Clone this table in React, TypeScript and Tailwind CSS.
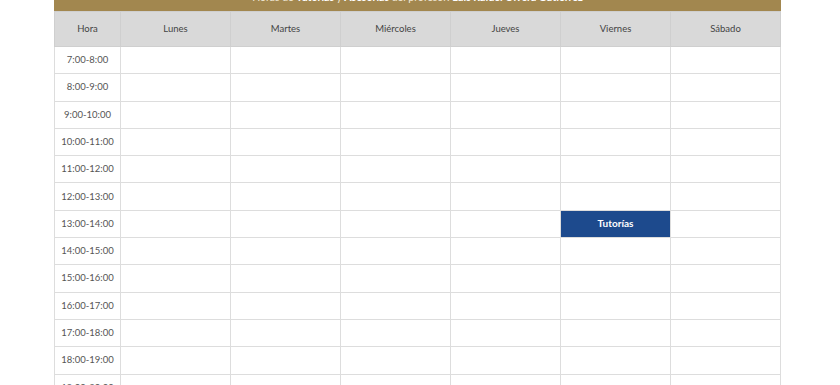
const days = ["Lunes", "Martes", "Miércoles", "Jueves", "Viernes", "Sábado"];

const hours = [
  "7:00-8:00",
  "8:00-9:00",
  "9:00-10:00",
  "10:00-11:00",
  "11:00-12:00",
  "12:00-13:00",
  "13:00-14:00",
  "14:00-15:00",
  "15:00-16:00",
  "16:00-17:00",
  "17:00-18:00",
  "18:00-19:00",
  "19:00-20:00",
];

// "hour-day" -> label
const slots: Record<string, string> = {
  "6-4": "Tutorías",
};

export default function App() {
  return (
    <div className="h-[385px] w-[840px] overflow-hidden bg-white font-['Lato',sans-serif] text-[#444]">
      <div className="ml-[54px] w-[727px]">
        {/* Title bar (scrolled partly out of view) */}
        <div className="h-[11px] overflow-hidden bg-[#a2874f] text-center">
          <p className="-mt-[9px] text-[10.5px] leading-[13px] text-[#f1e7d6]">
            Horas de <b className="text-white">Tutorías</b> y <b className="text-white">Asesorías</b> del profesor:{" "}
            <b className="text-white">Luis Rafael Olvera Gutiérrez</b>
          </p>
        </div>

        <table className="w-full table-fixed border-collapse text-[9.5px]">
          <colgroup>
            <col className="w-[66px]" />
            {days.map((d) => (
              <col key={d} />
            ))}
          </colgroup>
          <thead>
            <tr className="h-[35px] bg-[#d9d9d9]">
              <th className="border border-[#cfcfcf] font-normal text-[#444]">Hora</th>
              {days.map((d) => (
                <th key={d} className="border border-[#cfcfcf] font-normal text-[#444]">
                  {d}
                </th>
              ))}
            </tr>
          </thead>
          <tbody>
            {hours.map((h, i) => (
              <tr key={h} className="h-[27.3px]">
                <td className="border border-[#dddddd] text-center text-[#555]">{h}</td>
                {days.map((d, j) => {
                  const entry = slots[`${i}-${j}`];
                  return entry ? (
                    <td
                      key={d}
                      className="border border-[#dddddd] bg-[#1d4a8d] text-center text-[10px] font-bold text-white"
                    >
                      {entry}
                    </td>
                  ) : (
                    <td key={d} className="border border-[#dddddd]" />
                  );
                })}
              </tr>
            ))}
          </tbody>
        </table>
      </div>
    </div>
  );
}
